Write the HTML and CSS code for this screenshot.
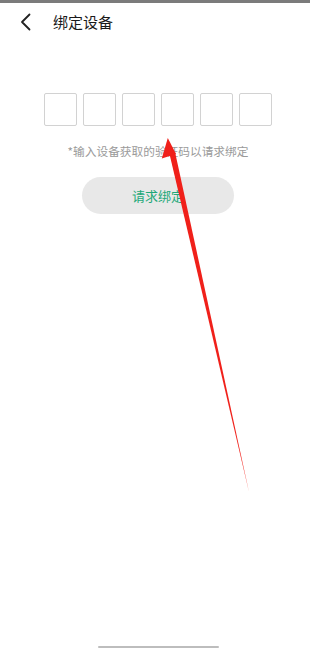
FILE: index.html
```html
<!DOCTYPE html>
<html lang="zh">
<head>
<meta charset="utf-8">
<title>绑定设备</title>
<link rel="stylesheet" href="styles.css">
</head>
<body>
<div class="status"></div>
<div class="app">
  <header class="header">
    <svg class="back" width="11" height="18" viewBox="0 0 11 18"><path d="M9.5 1.5 L2 9 L9.5 16.5" fill="none" stroke="#222" stroke-width="1.8" stroke-linecap="round" stroke-linejoin="round"/></svg>
    <h1 class="title">绑定设备</h1>
  </header>
  <main class="main">
    <div class="boxes">
      <div class="box"></div><div class="box"></div><div class="box"></div><div class="box"></div><div class="box"></div><div class="box"></div>
    </div>
    <p class="hint">*输入设备获取的验证码以请求绑定</p>
    <button class="btn">请求绑定</button>
  </main>
  <div class="home"></div>
</div>
<svg class="arrow" width="332" height="649" viewBox="0 0 332 649">
  <polygon points="169.5,154 175.2,152.8 249,492" fill="#f0201a"/>
  <polygon points="167.8,138 161.8,158.5 176,154" fill="#f0201a"/>
</svg>
</body>
</html>
```
FILE: styles.css
```css
html, body {
  margin: 0;
  padding: 0;
  background: #fff;
}
body {
  width: 332px;
  height: 649px;
  overflow: hidden;
  position: relative;
  font-family: "Noto Sans CJK SC", "Noto Sans", sans-serif;
}
.status {
  width: 310px;
  height: 2.5px;
  background: #7b7b7b;
}
.app {
  width: 316px;
  height: 646.5px;
  display: flex;
  flex-direction: column;
}
.header {
  height: 38px;
  display: flex;
  align-items: center;
  padding-left: 20px;
}
.back {
  display: block;
}
.title {
  margin: 0 0 0 22px;
  font-size: 15px;
  font-weight: 400;
  color: #1a1a1a;
  line-height: 20px;
}
.main {
  padding-top: 52px;
  display: flex;
  flex-direction: column;
  align-items: center;
}
.boxes {
  display: flex;
  gap: 6px;
}
.box {
  width: 31px;
  height: 31px;
  border: 1px solid #d2d2d2;
  border-radius: 2px;
}
.hint {
  margin: 17px 0 0;
  font-size: 11.7px;
  line-height: 16px;
  color: #9a9a9a;
}
.btn {
  margin-top: 18px;
  width: 152px;
  height: 37px;
  border: none;
  border-radius: 19px;
  background: #e8e8e8;
  color: #1ea879;
  font-family: "Noto Sans CJK SC", "Noto Sans", sans-serif;
  font-size: 13px;
  padding: 0;
}
.home {
  margin: auto auto 1px;
  width: 121px;
  height: 2.5px;
  background: #bdbdbd;
  border-radius: 2px;
}
.arrow {
  position: absolute;
  left: 0;
  top: 0;
  pointer-events: none;
}
```
